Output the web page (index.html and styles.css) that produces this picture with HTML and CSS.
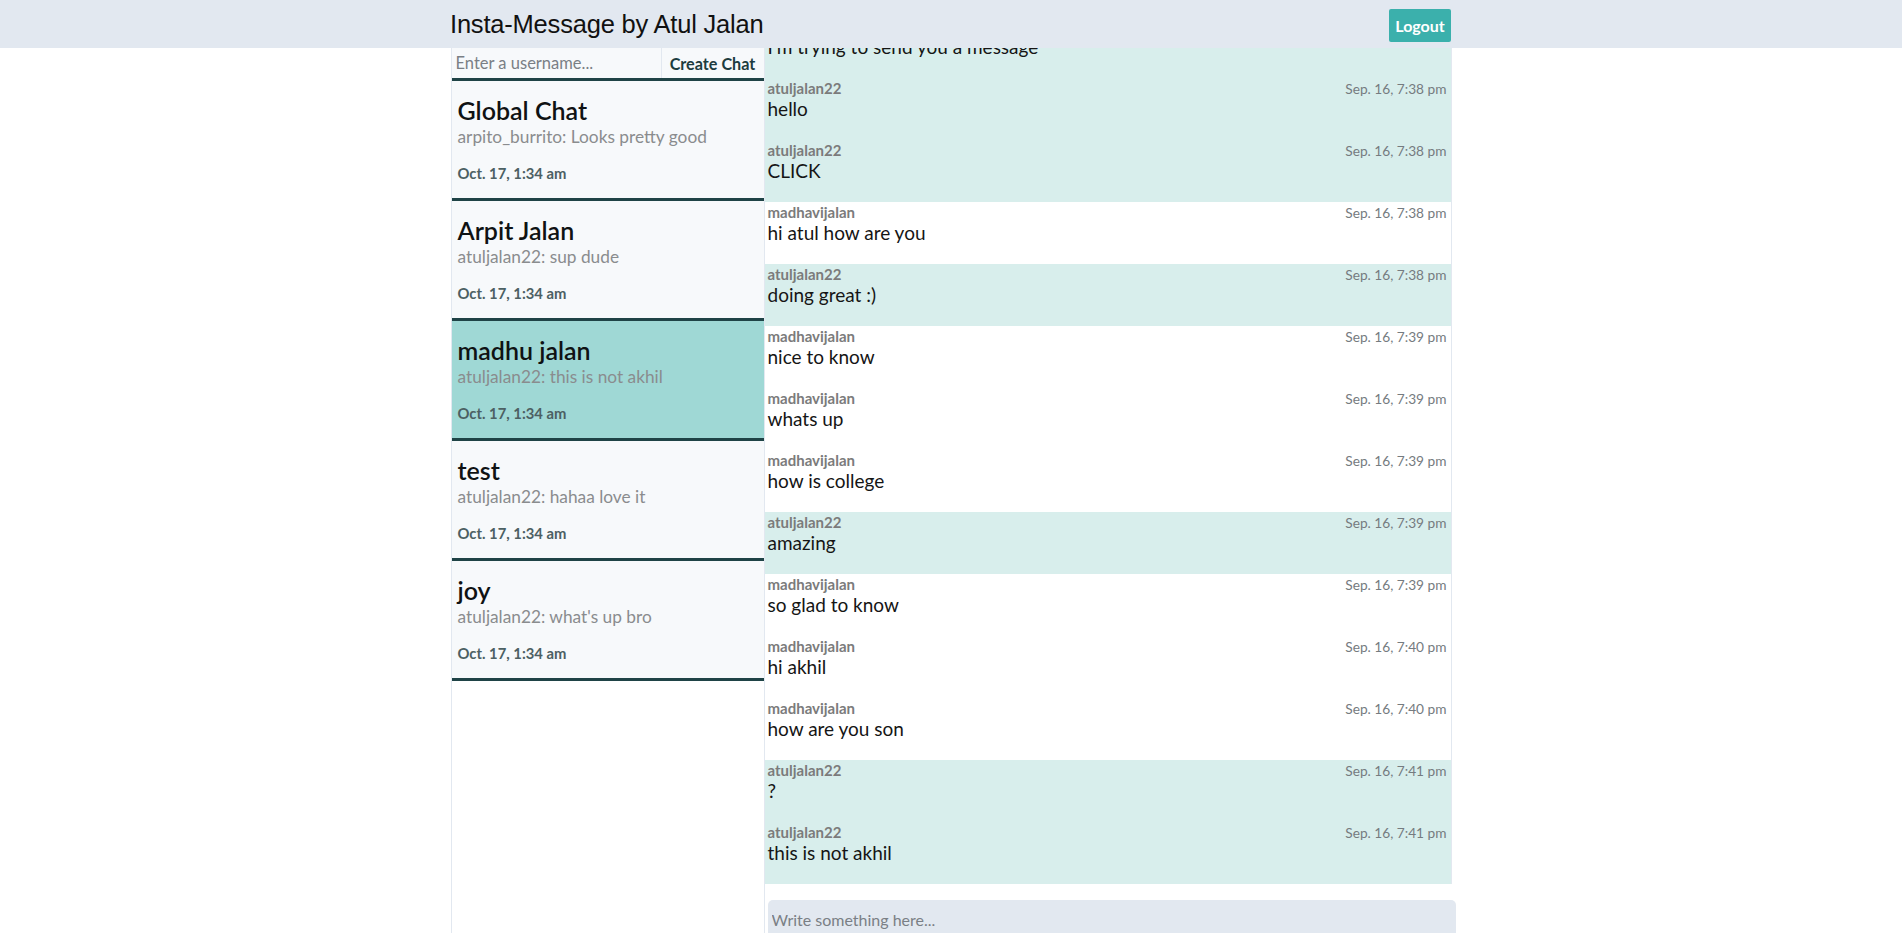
FILE: index.html
```html
<!DOCTYPE html>
<html lang="en">
<head>
<meta charset="utf-8">
<title>Insta-Message</title>
<link rel="stylesheet" href="styles.css">
</head>
<body>
<header class="topbar">
  <div class="topbar-inner">
    <h1 class="brand">Insta-Message by Atul Jalan</h1>
    <button class="logout">Logout</button>
  </div>
</header>
<main class="layout">
  <aside class="sidebar">
    <form class="new-chat">
      <input class="new-chat-input" type="text" placeholder="Enter a username...">
      <button class="new-chat-btn" type="button">Create Chat</button>
    </form>
    <div class="chat-item">
      <div class="chat-name">Global Chat</div>
      <div class="chat-last">arpito_burrito: Looks pretty good</div>
      <div class="chat-date">Oct. 17, 1:34 am</div>
    </div>
    <div class="chat-item">
      <div class="chat-name">Arpit Jalan</div>
      <div class="chat-last">atuljalan22: sup dude</div>
      <div class="chat-date">Oct. 17, 1:34 am</div>
    </div>
    <div class="chat-item active">
      <div class="chat-name">madhu jalan</div>
      <div class="chat-last">atuljalan22: this is not akhil</div>
      <div class="chat-date">Oct. 17, 1:34 am</div>
    </div>
    <div class="chat-item">
      <div class="chat-name">test</div>
      <div class="chat-last">atuljalan22: hahaa love it</div>
      <div class="chat-date">Oct. 17, 1:34 am</div>
    </div>
    <div class="chat-item">
      <div class="chat-name">joy</div>
      <div class="chat-last">atuljalan22: what's up bro</div>
      <div class="chat-date">Oct. 17, 1:34 am</div>
    </div>
  </aside>
  <section class="chat">
    <div class="messages">
      <div class="message-list">
        <div class="msg mine"><div class="meta"><span class="author">atuljalan22</span><span class="time">Sep. 16, 7:38 pm</span></div><div class="text">I'm trying to send you a message</div></div>
        <div class="msg mine"><div class="meta"><span class="author">atuljalan22</span><span class="time">Sep. 16, 7:38 pm</span></div><div class="text">hello</div></div>
        <div class="msg mine"><div class="meta"><span class="author">atuljalan22</span><span class="time">Sep. 16, 7:38 pm</span></div><div class="text">CLICK</div></div>
        <div class="msg"><div class="meta"><span class="author">madhavijalan</span><span class="time">Sep. 16, 7:38 pm</span></div><div class="text">hi atul how are you</div></div>
        <div class="msg mine"><div class="meta"><span class="author">atuljalan22</span><span class="time">Sep. 16, 7:38 pm</span></div><div class="text">doing great :)</div></div>
        <div class="msg"><div class="meta"><span class="author">madhavijalan</span><span class="time">Sep. 16, 7:39 pm</span></div><div class="text">nice to know</div></div>
        <div class="msg"><div class="meta"><span class="author">madhavijalan</span><span class="time">Sep. 16, 7:39 pm</span></div><div class="text">whats up</div></div>
        <div class="msg"><div class="meta"><span class="author">madhavijalan</span><span class="time">Sep. 16, 7:39 pm</span></div><div class="text">how is college</div></div>
        <div class="msg mine"><div class="meta"><span class="author">atuljalan22</span><span class="time">Sep. 16, 7:39 pm</span></div><div class="text">amazing</div></div>
        <div class="msg"><div class="meta"><span class="author">madhavijalan</span><span class="time">Sep. 16, 7:39 pm</span></div><div class="text">so glad to know</div></div>
        <div class="msg"><div class="meta"><span class="author">madhavijalan</span><span class="time">Sep. 16, 7:40 pm</span></div><div class="text">hi akhil</div></div>
        <div class="msg"><div class="meta"><span class="author">madhavijalan</span><span class="time">Sep. 16, 7:40 pm</span></div><div class="text">how are you son</div></div>
        <div class="msg mine"><div class="meta"><span class="author">atuljalan22</span><span class="time">Sep. 16, 7:41 pm</span></div><div class="text">?</div></div>
        <div class="msg mine"><div class="meta"><span class="author">atuljalan22</span><span class="time">Sep. 16, 7:41 pm</span></div><div class="text">this is not akhil</div></div>
      </div>
    </div>
    <div class="compose">
      <input class="compose-input" type="text" placeholder="Write something here...">
    </div>
  </section>
</main>
</body>
</html>
```

FILE: styles.css
```css
* { box-sizing: border-box; }

html, body {
  margin: 0;
  padding: 0;
  height: 100%;
  overflow: hidden;
  background: #ffffff;
  font-family: Lato, "Noto Sans", sans-serif;
  color: #1a202c;
}

.topbar {
  position: relative;
  z-index: 2;
  height: 48px;
  background: #e2e8f0;
}

.topbar-inner {
  width: 1002px;
  margin: 0 auto;
  height: 48px;
  display: flex;
  align-items: center;
  justify-content: space-between;
  padding-right: 1px;
}

.brand {
  margin: 0;
  font-family: "Liberation Sans", Arial, sans-serif;
  font-weight: 400;
  font-size: 25.5px;
  line-height: 30px;
  letter-spacing: -0.2px;
  color: #111;
}

.logout {
  height: 33px;
  width: 62px;
  padding: 0;
  border: none;
  border-radius: 2px;
  background: #3bb0ac;
  color: #ffffff;
  font-family: Lato, sans-serif;
  font-weight: 700;
  font-size: 16px;
  position: relative;
  top: 1px;
}

.layout {
  width: 1001px;
  margin: 0 auto;
  display: flex;
  height: 885px;
}

.sidebar {
  width: 314px;
  flex: none;
  border-left: 1px solid #e2e8f0;
  border-right: 1px solid #e2e8f0;
  height: 100%;
}

.new-chat {
  display: flex;
  height: 33px;
  margin: 0;
  background: #f7f9fb;
  border-bottom: 3px solid #1f4346;
}

.new-chat-input {
  flex: 1;
  min-width: 0;
  border: none;
  border-right: 1px solid #e2e8f0;
  background: transparent;
  padding: 0 4px;
  font-family: Lato, sans-serif;
  font-size: 16.5px;
  color: #333;
  outline: none;
}

.new-chat-input::placeholder { color: #7a7f85; }

.new-chat-btn {
  width: 102px;
  border: none;
  background: transparent;
  font-family: Lato, sans-serif;
  font-weight: 700;
  font-size: 16.2px;
  color: #1d3c3f;
  padding: 0;
  text-align: center;
}

.chat-item {
  height: 120px;
  padding: 14px 6px 0;
  background: #f7f9fb;
  border-bottom: 3px solid #1f4346;
}

.chat-item.active { background: #9fd8d5; }

.chat-name {
  font-size: 25px;
  line-height: 30px;
  font-weight: 600;
  color: #0f1213;
}

.chat-last {
  font-size: 17.3px;
  line-height: 24px;
  color: #8a8c8e;
}

.chat-date {
  margin-top: 15px;
  font-size: 14.8px;
  line-height: 18px;
  font-weight: 700;
  color: #4c6063;
}

.chat {
  flex: 1;
  display: flex;
  flex-direction: column;
  min-width: 0;
}

.messages {
  flex: none;
  height: 836px;
  overflow: hidden;
  border-right: 1px solid #e2e8f0;
}

.message-list { margin-top: -32px; }

.msg {
  height: 62px;
  padding: 2px 4px 0 3px;
  background: #ffffff;
}

.msg.mine { background: #d8eeec; }

.meta {
  display: flex;
  justify-content: space-between;
  align-items: baseline;
  height: 17px;
  line-height: 17px;
}

.author {
  font-size: 15px;
  font-weight: 700;
  color: #7b7b7b;
}

.time {
  font-size: 13.7px;
  color: #757b80;
}

.text {
  font-size: 19px;
  line-height: 24px;
  color: #151515;
}

.compose {
  flex: none;
  padding: 16px 0 0 3px;
}

.compose-input {
  width: 688px;
  height: 38px;
  border: none;
  border-radius: 5px;
  background: #e2e8f0;
  padding: 0 4px;
  font-family: Lato, sans-serif;
  font-size: 16px;
  color: #333;
  outline: none;
  display: block;
}

.compose-input::placeholder { color: #7a7f85; }
```
